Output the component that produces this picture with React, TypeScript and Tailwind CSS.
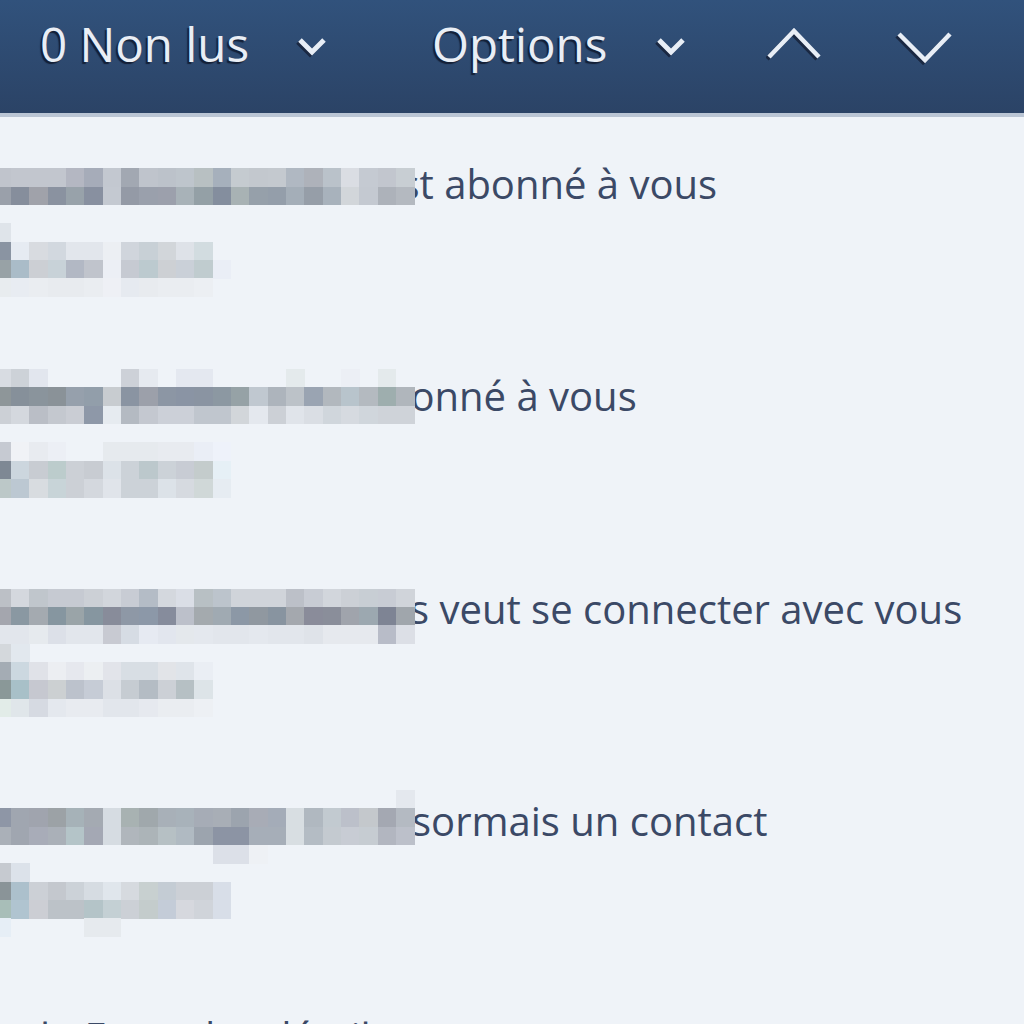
import React from "react";

type Item = { top: number; rows: string[]; text: string; textLeft: number };

const CELL = 18.333;
const OFFSET = -7.33;

const items: Item[] = [
  {
    top: 51.33,
    textLeft: 378,
    text: "est abonné à vous",
    rows: [
      "c0c4cc c2c6ce c2c6ce c2c6ce b4b7c2 a6acb9 c3c8d0 a2a8b2 bfc4cc bcc2ca bec5cc b8c0c2 a6b0bc c5cbd0 c3c8ce c4c9cf b0b8c2 aeb2ba bac2ca dadde3 c5cad2 c2c6ce c8ced3",
      "9aa0aa 868e9c a0a2aa 8a92a0 98a2aa 8890a0 c4c9d1 949aa6 9aa0ac 9ca0ac a8b2b8 94a0a6 848e9e a8b2b4 96a0aa 949eaa a4aeb8 969ea8 a8b2bc d2d6da c4c9d1 adb2ba b4b9c0",
      "",
      "dfe4ea",
      "8a94a2 e6ebf2 d8dbe0 d2d8df e2e6ec e2e6ec eceff3 d0d5dc c8d0d6 d2d6da dee2e8 d2dce0",
      "98a2a6 aabcc8 cccfd4 c8d2d8 b2b8c4 c0c4cc eceff5 c6cad2 bccacf cdd0d4 cad0d8 c0cccf eaeef6",
      "e8ecef e8ecf2 eaedf1 e8ebef e8ebef eaedf1 eef0f5 e6eaf0 e8ebef eaedf1 eaedf1 eceff3",
    ],
  },
  {
    top: 40,
    textLeft: 386,
    text: "bonné à vous",
    rows: [
      "d8dce2 cdd2d8 e2e6ee - - - - cdd1d8 e6eaf0 - e4e8f0 e4e8f0 - - - - e4eaec - - eceff5 - e4eaec -",
      "8e9699 86909a 8a949c 8a9298 96a0ac 929eaa c8ccd0 8a94a2 9ca0aa 8c96a4 8a94a4 8a94a2 8c98a2 96a2a6 c0c8d0 adb4bc bcc2c8 9aa4b2 b2b8be b8c4cc b4bac0 9eaeae b0b6bc",
      "ccd0d6 d4d8de babec6 c4c8cf cacdd4 8e98a8 e6ebf0 b4bac2 c4c8d0 ccd0d8 ccd0d8 c0c6ce c0c6ce d2d6da e4e8ee ccd0d6 e0e4ea dadee4 d0d6dc d6dae0 d0d6dc cfd3d9 cfd3d9",
      "",
      "c6cad2 f0f2f6 e8ebf0 eceff5 - - e6eaee e6eaee e6eaee e8ebf0 e8ebf0 eaeef6 eef2fa",
      "7e8894 ccd6de c8ccd2 bccccc ccd0d6 c8ccd2 dce2e8 ccd2d8 bcc8cc ccd2d8 c8ccd4 c4cccc e6f0f6",
      "bcc8c8 bcc8d2 d8dce0 c8d4d8 ccd0d6 d4d8de e0e4ea ccd2d8 ccd2d8 dce2e8 d6dae0 d0d8d8 e6ecf2",
    ],
  },
  {
    top: 46.67,
    textLeft: 410,
    text: "s veut se connecter avec vous",
    rows: [
      "bcc0c6 d4d8de c0c6cc c6cad2 c6cad2 ccd0d6 d2d6dc c8ccd4 b4bcc6 d4d8de dadee6 b8c0c4 bcc4cc d0d4da d0d4da d0d4da bcc0c8 c8ccd4 d2d6dc ccd0d6 c8ced4 c8ccd4 d0d4da",
      "a4a6ae 8a98a2 a4aab0 8696a0 9aa4a8 8696a0 888c9a 8e98a6 8c98a8 868c9c bcc0ca a4aaae a0aab2 8c98a6 9098a0 8894a0 a4a8ae 8a8c9a 8a8e9a a0a4ac 9ca8b0 7e8494 a0a6ac",
      "e2e6ec e2e6ec e6eaee dce0e8 e2e6ec e2e6ec c8cad2 d6dce4 e6eaf2 e2e6ee e4e8ec e4e8ee e2e6ec e2e6ec e4e8ee e2e6ec e2e6ec dfe3e9 e6e9ee e6e9ee e6e9ee b8bcc8 dcdfe6",
      "d4d8dc e2e8ee",
      "a4acb4 ccd8e0 e0e2e8 eceef2 e6e8ee eceff2 e2e4ea d8dee4 d8dee4 e2e4e8 dfe4ea eaeef4",
      "8a9898 a8c0c8 c6c8d0 ccd0d2 bcc2cc c6ccd6 dce0e6 c6ccd2 b4bcc4 ccd0d6 b6c0c4 dde4e8",
      "e2ece8 e0e6ea d6dae2 e4e8ee e8ebf0 e8ebf0 e2e6ec e2e6ec e6e9ef eaedf1 eaedf1 edf0f4",
    ],
  },
  {
    top: 36,
    textLeft: 412,
    text: "sormais un contact",
    rows: [
      "- - - - - - - - - - - - - - - - - - - - - - e4e8ee",
      "8e96a6 a0a6b0 a0a4ae 9ca2a6 a6b2b8 a4aab2 d6dce2 a8b2b2 a0a8ac a8b0b8 a8b2ba a6acb6 a8aeb6 9ca4ae a8acb6 a4acb8 d8dee2 b0b8c0 c2cad0 bcc0ca c4c8cc a4a8b2 b4bac2",
      "aab0b8 a0a6b0 a8acb8 aab0b8 b4c4c8 a4a8b4 d6dce2 b0b6bc acb4b8 b6c0c4 b0bac2 9ca4ae 8c94a4 8c94a4 a6aeb8 a6aeb8 d8dee2 b4bcc4 c4cad0 c8ccd4 c6ccd2 b2b6c0 bcc0ca",
      "- - - - - - - - - - - - dce0e8 dce0e8 eef1f5",
      "c6cad0 dce2ea",
      "8a9498 acc0cc ccd0d6 c4c8ce ccd2d8 d6dce2 e0e6ec d6dadf c8d0d0 c4ccd4 ccd0d6 ccd0d6 d8dee8",
      "a8beb8 b0c4d0 ccced4 bcc2c8 bcc2c8 b4c4c8 c4d0d4 ccd0d6 c4cccc c4ccd8 d6d8de d0d4da d8dee8",
      "e6eef6 - - - - e6eaee e6eaee",
    ],
  },
];

function Mosaic({ top, rows }: { top: number; rows: string[] }) {
  const rects: React.ReactNode[] = [];
  rows.forEach((row, r) => {
    if (!row) return;
    row.split(" ").forEach((c, col) => {
      if (c === "-" || !c) return;
      rects.push(
        <rect
          key={`${r}-${col}`}
          x={OFFSET + col * CELL}
          y={top + r * CELL}
          width={CELL + 0.4}
          height={CELL + 0.4}
          fill={`#${c}`}
        />
      );
    });
  });
  return (
    <svg
      className="absolute left-0 top-0"
      width={420}
      height={212}
      shapeRendering="crispEdges"
    >
      {rects}
    </svg>
  );
}

function SmallChevron() {
  return (
    <svg width="34" height="70" viewBox="0 0 34 70" className="block">
      <polyline points="3,42 15,54 27,42" fill="none" stroke="#16223a" strokeWidth="5" opacity="0.85" />
      <polyline points="5,40 17,52 29,40" fill="none" stroke="#e8eef6" strokeWidth="5" />
    </svg>
  );
}

const headerText =
  "text-[47.5px] leading-[46px] text-[#e9eef5] whitespace-nowrap [text-shadow:-2px_2px_1px_rgba(15,25,45,0.85)]";

export default function App() {
  return (
    <div
      className="w-[1024px] h-[1024px] overflow-hidden bg-[#eff3f8]"
      style={{ fontFamily: '"Open Sans", "Noto Sans", sans-serif' }}
    >
      <header className="h-[113px] bg-linear-to-b from-[#31527c] to-[#2b4366] flex items-start pl-[40px]">
        <div className="w-[256px] pt-[21px]">
          <span className={headerText}>0 Non lus</span>
        </div>
        <div className="w-[136px] -ml-[1px]">
          <SmallChevron />
        </div>
        <div className="w-[223px] pt-[21px] ml-[1px]">
          <span className={headerText}>Options</span>
        </div>
        <div className="w-[111px] -ml-[1px]">
          <SmallChevron />
        </div>
        <div className="w-[128px] ml-[1px]">
          <svg width="60" height="70" viewBox="0 0 60 70" className="block">
            <polyline points="1,59 26,33 51,59" fill="none" stroke="#16223a" strokeWidth="4.5" opacity="0.85" />
            <polyline points="3,57 28,31 53,57" fill="none" stroke="#e8eef6" strokeWidth="4.5" />
          </svg>
        </div>
        <div>
          <svg width="64" height="70" viewBox="0 0 64 70" className="block">
            <polyline points="3,36 29,62 54,36" fill="none" stroke="#16223a" strokeWidth="4.5" opacity="0.85" />
            <polyline points="5,34 31,60 56,34" fill="none" stroke="#e8eef6" strokeWidth="4.5" />
          </svg>
        </div>
      </header>
      <div className="h-[4px] bg-[#bac5d4]" />
      <ul className="flex flex-col">
        {items.map((it, i) => (
          <li key={i} className="relative h-[212.33px]">
            <p
              className="pt-[43px] text-[40px] leading-[48px] text-[#3b4966] whitespace-nowrap"
              style={{ paddingLeft: it.textLeft }}
            >
              {it.text}
            </p>
            <Mosaic top={it.top} rows={it.rows} />
          </li>
        ))}
        <li className="relative h-[120px]">
          <p className="pt-[47px] pl-[40px] text-[40px] leading-[48px] text-[#3b4966] whitespace-nowrap">
            lo Fotte des détail
          </p>
        </li>
      </ul>
    </div>
  );
}
